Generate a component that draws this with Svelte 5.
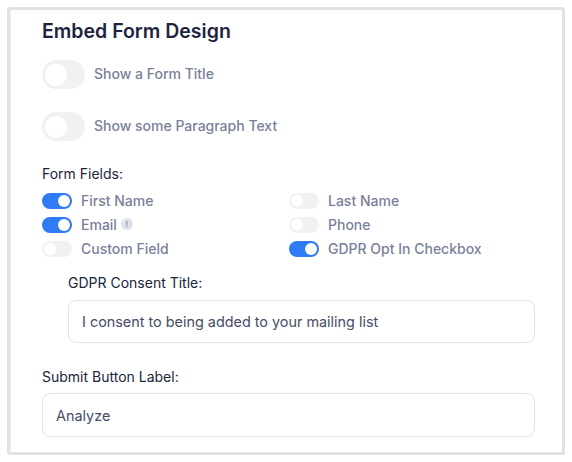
<script>
  const left = [
    { label: 'First Name', on: true },
    { label: 'Email', on: true, info: true },
    { label: 'Custom Field', on: false }
  ];
  const right = [
    { label: 'Last Name', on: false },
    { label: 'Phone', on: false },
    { label: 'GDPR Opt In Checkbox', on: true }
  ];
  const fields = [left[0], right[0], left[1], right[1], left[2], right[2]];
</script>

<div class="page">
  <div class="frame">
    <div class="content">
      <h2>Embed Form Design</h2>
      <div class="big-row">
        <span class="big-toggle"><span class="big-knob"></span></span>
        <span class="label">Show a Form Title</span>
      </div>
      <div class="big-row second">
        <span class="big-toggle"><span class="big-knob"></span></span>
        <span class="label">Show some Paragraph Text</span>
      </div>

      <div class="field-title">Form Fields:</div>
      <div class="grid">
        {#each fields as f}
          <div class="item">
            <span class="toggle" class:on={f.on}><span class="knob"></span></span>
            <span class="label">{f.label}</span>
            {#if f.info}<span class="info">!</span>{/if}
          </div>
        {/each}
      </div>

      <div class="gdpr">
        <div class="field-title small">GDPR Consent Title:</div>
        <div class="input short">I consent to being added to your mailing list</div>
      </div>

      <div class="submit">
        <div class="field-title small">Submit Button Label:</div>
        <div class="input tight">Analyze</div>
      </div>
    </div>
  </div>
</div>

<style>
  :global(body) {
    margin: 0;
    background: #fff;
  }
  .page {
    width: 572px;
    height: 462px;
    padding: 7px;
    box-sizing: border-box;
    font-family: Inter, "Liberation Sans", sans-serif;
  }
  .frame {
    width: 558px;
    height: 448px;
    box-sizing: border-box;
    border: 3px solid #e1e1e1;
    border-radius: 3px;
    overflow: hidden;
    background: #fff;
  }
  .content {
    height: 100%;
    box-sizing: border-box;
    padding: 9px 27px 0 31px;
    border-left: 1px solid #f1f1f1;
  }
  h2 {
    margin: 0;
    font-size: 19.5px;
    line-height: 24px;
    font-weight: 600;
    color: #1e2440;
  }
  .big-row {
    display: flex;
    align-items: center;
    gap: 9px;
    margin-top: 17px;
    height: 29px;
  }
  .big-row.second {
    margin-top: 23px;
  }
  .big-row .label {
    margin-top: -1px;
  }
  .big-toggle {
    width: 43px;
    height: 29px;
    border-radius: 15px;
    background: #f0f1f3;
    display: flex;
    align-items: center;
    padding-left: 3px;
    box-sizing: border-box;
  }
  .big-knob {
    width: 22px;
    height: 22px;
    border-radius: 50%;
    background: #fff;
  }
  .label {
    font-size: 14px;
    line-height: 20px;
    font-weight: 500;
    color: #7a7f9a;
  }
  .field-title {
    margin-top: 23px;
    font-size: 14px;
    line-height: 20px;
    font-weight: 400;
    color: #20253c;
  }
  .field-title.small {
    margin-top: 0;
  }
  .grid {
    display: grid;
    grid-template-columns: 247px 1fr;
    grid-auto-rows: 24px;
    margin-top: 5px;
  }
  .item {
    display: flex;
    align-items: center;
    gap: 9px;
  }
  .toggle {
    width: 30px;
    height: 16px;
    border-radius: 8px;
    background: #f0f1f3;
    display: flex;
    align-items: center;
    padding: 0 2px;
    box-sizing: border-box;
  }
  .toggle.on {
    background: #2f7bf5;
    justify-content: flex-end;
  }
  .knob {
    width: 12px;
    height: 12px;
    border-radius: 50%;
    background: #fff;
  }
  .info {
    width: 12px;
    height: 12px;
    margin-left: -5px;
    margin-top: -2px;
    border-radius: 50%;
    background: #dfe2ea;
    color: #8a8fa5;
    font-size: 8px;
    line-height: 12px;
    text-align: center;
    font-weight: 600;
  }
  .gdpr {
    margin: 12px 0 0 26px;
  }
  .submit {
    margin-top: 24px;
  }
  .input {
    margin-top: 7px;
    height: 44px;
    box-sizing: border-box;
    border: 1px solid #dfe3ed;
    border-radius: 8px;
    padding: 0 13px;
    display: flex;
    align-items: center;
    font-size: 14.4px;
    font-weight: 400;
    color: #474c68;
  }
  .input.tight {
    margin-top: 6px;
  }
  .input.short {
    height: 43px;
  }
</style>
